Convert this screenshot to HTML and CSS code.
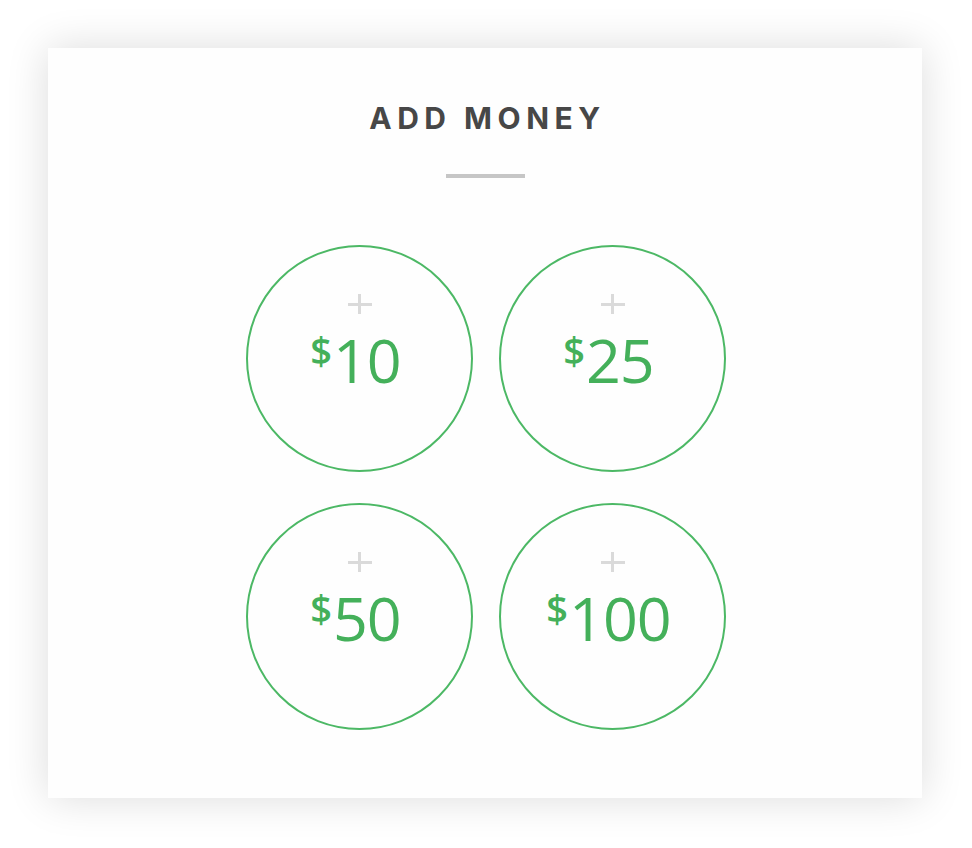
FILE: index.html
```html
<!DOCTYPE html>
<html>
<head>
<meta charset="utf-8">
<link rel="stylesheet" href="styles.css">
</head>
<body>
<div class="page">
  <section class="card">
    <h1 class="title">ADD MONEY</h1>
    <div class="divider"></div>
    <div class="grid">
      <button class="coin"><span class="plus"></span><span class="amount"><span class="cur">$</span>10</span></button>
      <button class="coin"><span class="plus"></span><span class="amount"><span class="cur">$</span>25</span></button>
      <button class="coin"><span class="plus"></span><span class="amount"><span class="cur">$</span>50</span></button>
      <button class="coin"><span class="plus"></span><span class="amount"><span class="cur">$</span>100</span></button>
    </div>
  </section>
</div>
</body>
</html>
```
FILE: styles.css
```css
html, body {
  margin: 0;
  padding: 0;
  background: #ffffff;
}
.page {
  width: 972px;
  height: 848px;
  padding: 48px 0 0 48px;
  box-sizing: border-box;
}
.card {
  width: 874px;
  height: 750px;
  background: #fefefe;
  box-shadow: 0 0 40px rgba(0, 0, 0, 0.14);
  display: flex;
  flex-direction: column;
  align-items: center;
  box-sizing: border-box;
  padding-top: 52px;
}
.title {
  margin: 0;
  font-family: "Inter", sans-serif;
  font-weight: 700;
  font-size: 30px;
  line-height: 36px;
  letter-spacing: 5.5px;
  color: #474747;
  padding-left: 5px;
}
.divider {
  width: 79px;
  height: 4px;
  background: #c6c6c6;
  margin-top: 38px;
}
.grid {
  margin-top: 67px;
  display: grid;
  grid-template-columns: 227px 227px;
  grid-auto-rows: 227px;
  column-gap: 26px;
  row-gap: 31px;
  margin-left: 2px;
}
.coin {
  all: unset;
  box-sizing: border-box;
  width: 227px;
  height: 227px;
  border: 2px solid #4cb865;
  border-radius: 50%;
  display: flex;
  flex-direction: column;
  align-items: center;
  cursor: pointer;
  padding-top: 47px;
}
.plus {
  position: relative;
  width: 24px;
  height: 20px;
}
.plus::before, .plus::after {
  content: "";
  position: absolute;
  background: #dadada;
}
.plus::before {
  left: 0;
  right: 0;
  top: 8.5px;
  height: 3px;
}
.plus::after {
  top: 0;
  bottom: 0;
  left: 10.5px;
  width: 3px;
}
.amount {
  font-family: "Open Sans", sans-serif;
  font-weight: 400;
  font-size: 61px;
  line-height: 70px;
  color: #44b05a;
  margin-top: 1px;
  letter-spacing: -1px;
  margin-right: 8px;
}
.cur {
  font-size: 38px;
  vertical-align: 18px;
  font-weight: 600;
  margin-right: 2px;
}
```
